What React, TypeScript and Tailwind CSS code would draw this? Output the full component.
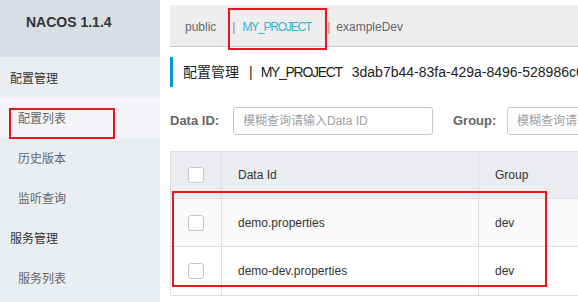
import React from 'react';

const font = { fontFamily: '"Liberation Sans", "Noto Sans CJK SC", sans-serif' };

const Checkbox: React.FC = () => (
  <span className="block w-[16px] h-[16px] rounded-[3px] border border-[#c4c6cf] bg-white" />
);

const rows = [
  { id: 'demo.properties', group: 'dev', bg: 'bg-[#fafafa]' },
  { id: 'demo-dev.properties', group: 'dev', bg: 'bg-white' },
];

const App: React.FC = () => {
  return (
    <div className="w-[578px] h-[302px] flex overflow-hidden bg-white relative" style={font}>
      {/* Sidebar */}
      <div className="w-[160px] shrink-0 flex flex-col bg-[#eaedf1]">
        <div className="h-[57px] bg-[#d9dee4] pl-[26px] pt-[14px]">
          <span className="block text-[14px] leading-[16px] font-bold text-[#333]">NACOS 1.1.4</span>
        </div>
        <div className="h-[40px] flex items-center pt-[4px] pl-[10px] text-[12px] text-[#333]">配置管理</div>
        <div className="h-[40px] flex items-center pt-[4px] pl-[18px] text-[12px] text-[#666] bg-[#f3f4f7]">配置列表</div>
        <div className="h-[40px] flex items-center pt-[4px] pl-[18px] text-[12px] text-[#666]">历史版本</div>
        <div className="h-[40px] flex items-center pt-[4px] pl-[18px] text-[12px] text-[#666]">监听查询</div>
        <div className="h-[40px] flex items-center pt-[4px] pl-[10px] text-[12px] text-[#333]">服务管理</div>
        <div className="h-[40px] flex items-center pt-[4px] pl-[18px] text-[12px] text-[#666]">服务列表</div>
      </div>

      {/* Main */}
      <div className="flex-1 min-w-0 overflow-hidden pl-[10px] pt-[5px] flex flex-col">
        <div className="h-[42px] shrink-0 bg-[#eeeeee] border-b border-[#c8c8c8] flex items-center pt-[3px] pl-[15px] text-[12px] text-[#666] whitespace-nowrap">
          <span>public</span>
          <span className="ml-[16px] text-[#888]">|</span>
          <span className="ml-[7px] text-[#2eb3d8] tracking-[-1.2px]">MY_PROJECT</span>
          <span className="ml-[16px] text-[#888]">|</span>
          <span className="ml-[6px]">exampleDev</span>
        </div>

        <div className="mt-[10px] h-[30px] shrink-0 flex items-center pt-[1px] border-l-[3px] border-[#009bd3] pl-[10px] text-[14px] text-[#222] whitespace-nowrap">
          <span>配置管理</span>
          <span className="ml-[10px]">|</span>
          <span className="ml-[8px] tracking-[-1.3px]">MY_PROJECT</span>
          <span className="ml-[10px]">3dab7b44-83fa-429a-8496-528986c65a2e</span>
        </div>

        <div className="mt-[20px] shrink-0 flex items-center whitespace-nowrap">
          <span className="shrink-0 w-[63px] text-[13px] font-bold text-[#666]">Data ID:</span>
          <div className="shrink-0 w-[200px] h-[28px] border border-[#c4c6cf] rounded-[3px] flex items-center pl-[9px] text-[12px] text-[#a0a0a0]">
            模糊查询请输入Data ID
          </div>
          <span className="shrink-0 ml-[20px] w-[54px] text-[13px] font-bold text-[#666]">Group:</span>
          <div className="shrink-0 w-[200px] h-[28px] border border-[#c4c6cf] rounded-[3px] flex items-center pl-[9px] text-[12px] text-[#a0a0a0]">
            模糊查询请输入Group
          </div>
        </div>

        <div className="mt-[16px] shrink-0 w-[520px] border border-[#dcdee3] text-[12px] text-[#333]">
          <div className="h-[47px] bg-[#ebecf0] flex border-b border-[#dcdee3]">
            <div className="w-[51px] flex items-center justify-center border-r border-[#dcdee3]">
              <Checkbox />
            </div>
            <div className="w-[257px] flex items-center pl-[16px] border-r border-[#dcdee3]">Data Id</div>
            <div className="flex-1 flex items-center pl-[16px]">Group</div>
          </div>
          {rows.map((r, i) => (
            <div key={r.id} className={`h-[48px] flex ${r.bg} ${i === 0 ? 'border-b border-[#dcdee3]' : ''}`}>
              <div className="w-[51px] flex items-center justify-center border-r border-[#dcdee3]">
                <Checkbox />
              </div>
              <div className="w-[257px] flex items-center pl-[16px] border-r border-[#dcdee3]">{r.id}</div>
              <div className="flex-1 flex items-center pl-[16px]">{r.group}</div>
            </div>
          ))}
        </div>
      </div>

      {/* Annotation boxes */}
      <div className="absolute left-[9px] top-[108px] w-[106px] h-[31px] border-2 border-[#e8161f]" />
      <div className="absolute left-[228px] top-[8px] w-[99px] h-[42px] border-2 border-[#e8161f]" />
      <div className="absolute left-[172px] top-[191px] w-[375px] h-[96px] border-2 border-[#e8161f]" />
    </div>
  );
};

export default App;
